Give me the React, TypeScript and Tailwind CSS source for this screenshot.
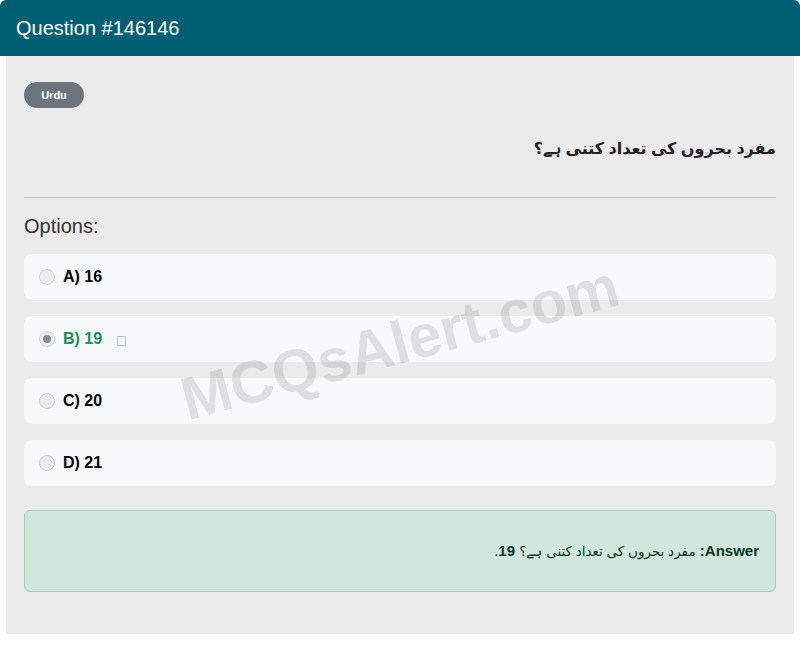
import React from "react";

const options = [
  { key: "A", text: "16", correct: false },
  { key: "B", text: "19", correct: true },
  { key: "C", text: "20", correct: false },
  { key: "D", text: "21", correct: false },
];

const font = { fontFamily: '"Liberation Sans", "DejaVu Sans", Arial, sans-serif' };

export default function App() {
  return (
    <div className="w-[800px] h-[664px] bg-white" style={font}>
      <div className="relative">
        <div className="h-[56px] bg-[#005f73] rounded-t-[6px] px-4 flex items-center">
          <h1 className="text-[20px] text-white">Question #146146</h1>
        </div>

        <div className="mx-[6px] h-[578px] bg-[#ebebeb] px-[18px] pt-[26px]">
          <span className="inline-flex items-center justify-center h-[26px] w-[60px] rounded-full bg-[#6c757d] text-white text-[11px] font-bold">
            Urdu
          </span>

          <p dir="rtl" className="mt-[26px] text-[16px] font-bold text-[#222] leading-[30px]">
            مفرد بحروں کی تعداد کتنی ہے؟
          </p>

          <hr className="mt-[33px] border-0 border-t border-[#bdbdbd]" />

          <h3 className="mt-[16px] text-[20px] text-[#333] leading-[24px]">Options:</h3>

          <div className="mt-[16px] flex flex-col gap-4">
            {options.map((o) => (
              <div key={o.key} className="h-[46px] rounded-[8px] bg-[#f8f9fc] flex items-center px-[15px]">
                <span className="w-4 h-4 rounded-full border border-[#cfcfcf] bg-[#ececec] flex items-center justify-center">
                  {o.correct && <span className="w-2 h-2 rounded-full bg-[#8a8a8a]" />}
                </span>
                <span className={`ml-2 text-[16px] font-bold ${o.correct ? "text-[#1e8c5a]" : "text-black"}`}>
                  {o.key}) {o.text}
                </span>
                {o.correct && <span className="ml-[15px] mt-[4px] w-[9px] h-[10px] border border-[#9fd3bb]" />}
              </div>
            ))}
          </div>

          <div className="mt-[24px] h-[82px] rounded-[6px] border border-[#a3cfbb] bg-[#d1e7dd] px-4 flex items-center">
            <p dir="rtl" className="w-full text-[15px] text-[#0a3622]">
              <strong>Answer:</strong> <span className="text-[13.5px]">مفرد بحروں کی تعداد کتنی ہے؟</span> <strong>19</strong>.
            </p>
          </div>
        </div>

        <div className="pointer-events-none absolute left-[400px] top-[343px] -translate-x-1/2 -translate-y-1/2 -rotate-[15deg] text-[60px] font-bold text-black/10 whitespace-nowrap">
          MCQsAlert.com
        </div>
      </div>
    </div>
  );
}
